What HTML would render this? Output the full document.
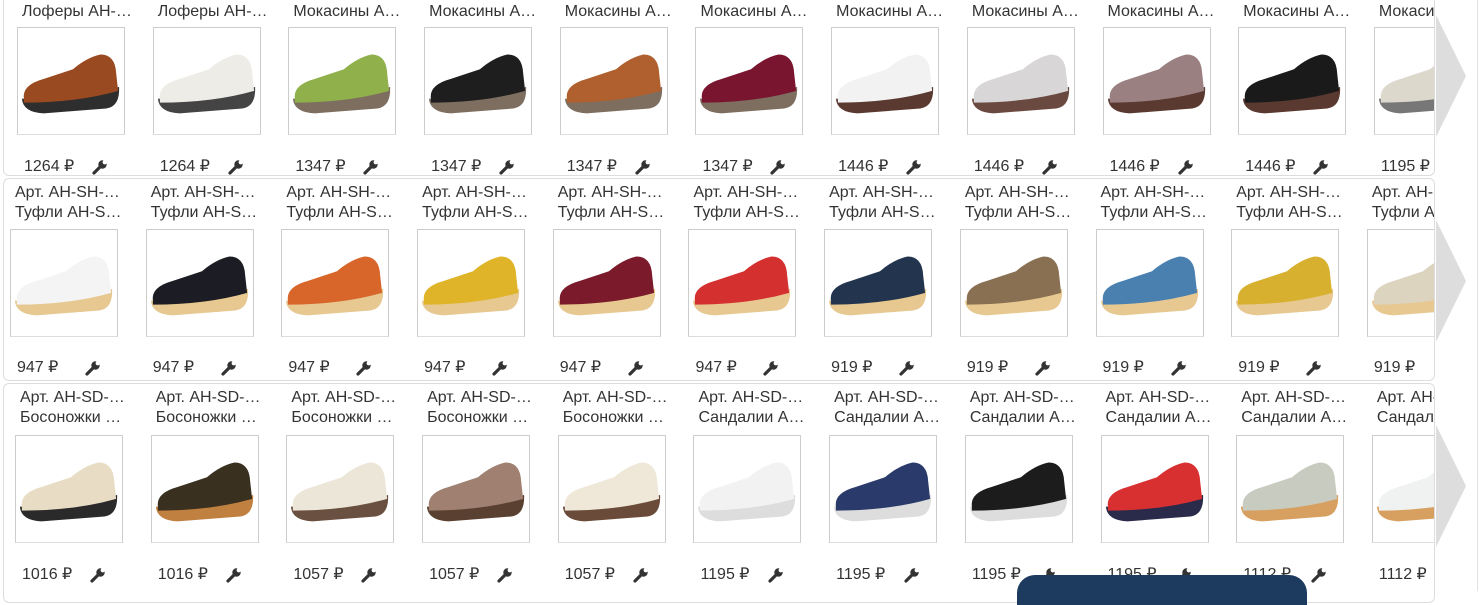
<!DOCTYPE html>
<html><head><meta charset="utf-8">
<style>
*{margin:0;padding:0;box-sizing:border-box}
body{width:1482px;height:591px;overflow:hidden;background:#fff;font-family:"Liberation Sans",Arial,sans-serif;color:#333;position:relative}
.card{position:absolute;left:3px;width:1432px;border:1px solid #ddd;border-radius:6px;overflow:hidden;background:#fff}
.row{position:absolute;display:flex;top:0}
.it{width:135.7px;flex:none;position:relative;font-size:16px;line-height:20px}
.t{white-space:nowrap;overflow:hidden;text-overflow:ellipsis;width:118px;padding-left:5px}
.img{width:108px;height:108px;border:1px solid #ccc;border-bottom-color:#ddd;background:#fff;position:absolute;left:0}
.p{position:absolute;left:7px;white-space:nowrap}
.w{position:absolute;left:75px}
.arr{position:absolute;left:1436px}
</style></head><body>
<svg width="0" height="0" style="position:absolute">
<defs>
<symbol id="up" viewBox="0 0 108 108"><path d="M6 72 Q4 58 26 52 L56 42 Q70 30 84 27 Q99 27 100 46 L102 64 Q60 76 6 76Z" fill="currentColor"/></symbol>
<symbol id="so" viewBox="0 0 108 108"><path d="M4 72 Q5 86 26 87 L90 82 Q104 80 103 60 Q60 76 4 72Z" fill="currentColor"/></symbol>
<symbol id="wr" viewBox="0 0 16 16"><path d="M2 14 L8 8" stroke="#333" stroke-width="3.2" stroke-linecap="round"/><circle cx="10.5" cy="5.5" r="4.2" fill="#333"/><circle cx="12.8" cy="3.2" r="2.2" fill="#fff"/></symbol>
</defs></svg>

<!-- ROW 1 -->
<div class="card" style="top:-6px;height:182px">
<div class="row" style="left:13px;top:7px">
<div class="it"><div class="t">Лоферы АН-…</div><div class="img" style="top:25px"><svg width="106" height="106"><use href="#so" style="color:#2e2e2e"/><use href="#up" style="color:#9a4a20"/></svg></div><div class="p" style="top:155px">1264 ₽</div><svg class="w" style="top:157px" width="16" height="16"><use href="#wr"/></svg></div>
<div class="it"><div class="t">Лоферы АН-…</div><div class="img" style="top:25px"><svg width="106" height="106"><use href="#so" style="color:#444"/><use href="#up" style="color:#eeece6"/></svg></div><div class="p" style="top:155px">1264 ₽</div><svg class="w" style="top:157px" width="16" height="16"><use href="#wr"/></svg></div>
<div class="it"><div class="t">Мокасины А…</div><div class="img" style="top:25px"><svg width="106" height="106"><use href="#so" style="color:#7d6e60"/><use href="#up" style="color:#8fb04a"/></svg></div><div class="p" style="top:155px">1347 ₽</div><svg class="w" style="top:157px" width="16" height="16"><use href="#wr"/></svg></div>
<div class="it"><div class="t">Мокасины А…</div><div class="img" style="top:25px"><svg width="106" height="106"><use href="#so" style="color:#7d6e60"/><use href="#up" style="color:#1e1e1e"/></svg></div><div class="p" style="top:155px">1347 ₽</div><svg class="w" style="top:157px" width="16" height="16"><use href="#wr"/></svg></div>
<div class="it"><div class="t">Мокасины А…</div><div class="img" style="top:25px"><svg width="106" height="106"><use href="#so" style="color:#7d6e60"/><use href="#up" style="color:#b0602e"/></svg></div><div class="p" style="top:155px">1347 ₽</div><svg class="w" style="top:157px" width="16" height="16"><use href="#wr"/></svg></div>
<div class="it"><div class="t">Мокасины А…</div><div class="img" style="top:25px"><svg width="106" height="106"><use href="#so" style="color:#7d6e60"/><use href="#up" style="color:#7a1530"/></svg></div><div class="p" style="top:155px">1347 ₽</div><svg class="w" style="top:157px" width="16" height="16"><use href="#wr"/></svg></div>
<div class="it"><div class="t">Мокасины А…</div><div class="img" style="top:25px"><svg width="106" height="106"><use href="#so" style="color:#5a3a30"/><use href="#up" style="color:#f2f2f2"/></svg></div><div class="p" style="top:155px">1446 ₽</div><svg class="w" style="top:157px" width="16" height="16"><use href="#wr"/></svg></div>
<div class="it"><div class="t">Мокасины А…</div><div class="img" style="top:25px"><svg width="106" height="106"><use href="#so" style="color:#6a4a40"/><use href="#up" style="color:#d8d6d6"/></svg></div><div class="p" style="top:155px">1446 ₽</div><svg class="w" style="top:157px" width="16" height="16"><use href="#wr"/></svg></div>
<div class="it"><div class="t">Мокасины А…</div><div class="img" style="top:25px"><svg width="106" height="106"><use href="#so" style="color:#5a3a30"/><use href="#up" style="color:#9a8080"/></svg></div><div class="p" style="top:155px">1446 ₽</div><svg class="w" style="top:157px" width="16" height="16"><use href="#wr"/></svg></div>
<div class="it"><div class="t">Мокасины А…</div><div class="img" style="top:25px"><svg width="106" height="106"><use href="#so" style="color:#5a3a30"/><use href="#up" style="color:#1a1a1a"/></svg></div><div class="p" style="top:155px">1446 ₽</div><svg class="w" style="top:157px" width="16" height="16"><use href="#wr"/></svg></div>
<div class="it"><div class="t">Мокасины А…</div><div class="img" style="top:25px"><svg width="106" height="106"><use href="#so" style="color:#777"/><use href="#up" style="color:#dcd8cc"/></svg></div><div class="p" style="top:155px">1195 ₽</div><svg class="w" style="top:157px" width="16" height="16"><use href="#wr"/></svg></div>
</div></div>

<!-- ROW 2 -->
<div class="card" style="top:178px;height:203px">
<div class="row" style="left:6px;top:4px">
<div class="it"><div class="t">Арт. АН-SH-…</div><div class="t">Туфли АН-S…</div><div class="img" style="top:46px"><svg width="106" height="106"><use href="#so" style="color:#e6c890"/><use href="#up" style="color:#f4f4f4"/></svg></div><div class="p" style="top:175px">947 ₽</div><svg class="w" style="top:177px" width="16" height="16"><use href="#wr"/></svg></div>
<div class="it"><div class="t">Арт. АН-SH-…</div><div class="t">Туфли АН-S…</div><div class="img" style="top:46px"><svg width="106" height="106"><use href="#so" style="color:#e6c890"/><use href="#up" style="color:#1c1c24"/></svg></div><div class="p" style="top:175px">947 ₽</div><svg class="w" style="top:177px" width="16" height="16"><use href="#wr"/></svg></div>
<div class="it"><div class="t">Арт. АН-SH-…</div><div class="t">Туфли АН-S…</div><div class="img" style="top:46px"><svg width="106" height="106"><use href="#so" style="color:#e6c890"/><use href="#up" style="color:#d8662a"/></svg></div><div class="p" style="top:175px">947 ₽</div><svg class="w" style="top:177px" width="16" height="16"><use href="#wr"/></svg></div>
<div class="it"><div class="t">Арт. АН-SH-…</div><div class="t">Туфли АН-S…</div><div class="img" style="top:46px"><svg width="106" height="106"><use href="#so" style="color:#e6c890"/><use href="#up" style="color:#e0b428"/></svg></div><div class="p" style="top:175px">947 ₽</div><svg class="w" style="top:177px" width="16" height="16"><use href="#wr"/></svg></div>
<div class="it"><div class="t">Арт. АН-SH-…</div><div class="t">Туфли АН-S…</div><div class="img" style="top:46px"><svg width="106" height="106"><use href="#so" style="color:#e6c890"/><use href="#up" style="color:#7a1a2a"/></svg></div><div class="p" style="top:175px">947 ₽</div><svg class="w" style="top:177px" width="16" height="16"><use href="#wr"/></svg></div>
<div class="it"><div class="t">Арт. АН-SH-…</div><div class="t">Туфли АН-S…</div><div class="img" style="top:46px"><svg width="106" height="106"><use href="#so" style="color:#e6c890"/><use href="#up" style="color:#d43030"/></svg></div><div class="p" style="top:175px">947 ₽</div><svg class="w" style="top:177px" width="16" height="16"><use href="#wr"/></svg></div>
<div class="it"><div class="t">Арт. АН-SH-…</div><div class="t">Туфли АН-S…</div><div class="img" style="top:46px"><svg width="106" height="106"><use href="#so" style="color:#e6c890"/><use href="#up" style="color:#22344e"/></svg></div><div class="p" style="top:175px">919 ₽</div><svg class="w" style="top:177px" width="16" height="16"><use href="#wr"/></svg></div>
<div class="it"><div class="t">Арт. АН-SH-…</div><div class="t">Туфли АН-S…</div><div class="img" style="top:46px"><svg width="106" height="106"><use href="#so" style="color:#e6c890"/><use href="#up" style="color:#8a7052"/></svg></div><div class="p" style="top:175px">919 ₽</div><svg class="w" style="top:177px" width="16" height="16"><use href="#wr"/></svg></div>
<div class="it"><div class="t">Арт. АН-SH-…</div><div class="t">Туфли АН-S…</div><div class="img" style="top:46px"><svg width="106" height="106"><use href="#so" style="color:#e6c890"/><use href="#up" style="color:#4a80b0"/></svg></div><div class="p" style="top:175px">919 ₽</div><svg class="w" style="top:177px" width="16" height="16"><use href="#wr"/></svg></div>
<div class="it"><div class="t">Арт. АН-SH-…</div><div class="t">Туфли АН-S…</div><div class="img" style="top:46px"><svg width="106" height="106"><use href="#so" style="color:#e6c890"/><use href="#up" style="color:#d8b030"/></svg></div><div class="p" style="top:175px">919 ₽</div><svg class="w" style="top:177px" width="16" height="16"><use href="#wr"/></svg></div>
<div class="it"><div class="t">Арт. АН-SH-…</div><div class="t">Туфли АН-S…</div><div class="img" style="top:46px"><svg width="106" height="106"><use href="#so" style="color:#e6c890"/><use href="#up" style="color:#ddd4c0"/></svg></div><div class="p" style="top:175px">919 ₽</div><svg class="w" style="top:177px" width="16" height="16"><use href="#wr"/></svg></div>
</div></div>

<!-- ROW 3 -->
<div class="card" style="top:383px;height:220px">
<div class="row" style="left:11px;top:4px">
<div class="it"><div class="t">Арт. АН-SD-…</div><div class="t">Босоножки …</div><div class="img" style="top:47px"><svg width="106" height="106"><use href="#so" style="color:#2a2a2a"/><use href="#up" style="color:#e8dcc4"/></svg></div><div class="p" style="top:177px">1016 ₽</div><svg class="w" style="top:179px" width="16" height="16"><use href="#wr"/></svg></div>
<div class="it"><div class="t">Арт. АН-SD-…</div><div class="t">Босоножки …</div><div class="img" style="top:47px"><svg width="106" height="106"><use href="#so" style="color:#c08040"/><use href="#up" style="color:#3a3020"/></svg></div><div class="p" style="top:177px">1016 ₽</div><svg class="w" style="top:179px" width="16" height="16"><use href="#wr"/></svg></div>
<div class="it"><div class="t">Арт. АН-SD-…</div><div class="t">Босоножки …</div><div class="img" style="top:47px"><svg width="106" height="106"><use href="#so" style="color:#6a5040"/><use href="#up" style="color:#ece6d8"/></svg></div><div class="p" style="top:177px">1057 ₽</div><svg class="w" style="top:179px" width="16" height="16"><use href="#wr"/></svg></div>
<div class="it"><div class="t">Арт. АН-SD-…</div><div class="t">Босоножки …</div><div class="img" style="top:47px"><svg width="106" height="106"><use href="#so" style="color:#5a4030"/><use href="#up" style="color:#a08070"/></svg></div><div class="p" style="top:177px">1057 ₽</div><svg class="w" style="top:179px" width="16" height="16"><use href="#wr"/></svg></div>
<div class="it"><div class="t">Арт. АН-SD-…</div><div class="t">Босоножки …</div><div class="img" style="top:47px"><svg width="106" height="106"><use href="#so" style="color:#6a4a38"/><use href="#up" style="color:#efe8d8"/></svg></div><div class="p" style="top:177px">1057 ₽</div><svg class="w" style="top:179px" width="16" height="16"><use href="#wr"/></svg></div>
<div class="it"><div class="t">Арт. АН-SD-…</div><div class="t">Сандалии А…</div><div class="img" style="top:47px"><svg width="106" height="106"><use href="#so" style="color:#ddd"/><use href="#up" style="color:#f2f2f2"/></svg></div><div class="p" style="top:177px">1195 ₽</div><svg class="w" style="top:179px" width="16" height="16"><use href="#wr"/></svg></div>
<div class="it"><div class="t">Арт. АН-SD-…</div><div class="t">Сандалии А…</div><div class="img" style="top:47px"><svg width="106" height="106"><use href="#so" style="color:#ddd"/><use href="#up" style="color:#2a3a6a"/></svg></div><div class="p" style="top:177px">1195 ₽</div><svg class="w" style="top:179px" width="16" height="16"><use href="#wr"/></svg></div>
<div class="it"><div class="t">Арт. АН-SD-…</div><div class="t">Сандалии А…</div><div class="img" style="top:47px"><svg width="106" height="106"><use href="#so" style="color:#ddd"/><use href="#up" style="color:#1c1c1c"/></svg></div><div class="p" style="top:177px">1195 ₽</div><svg class="w" style="top:179px" width="16" height="16"><use href="#wr"/></svg></div>
<div class="it"><div class="t">Арт. АН-SD-…</div><div class="t">Сандалии А…</div><div class="img" style="top:47px"><svg width="106" height="106"><use href="#so" style="color:#2a2a4a"/><use href="#up" style="color:#d83030"/></svg></div><div class="p" style="top:177px">1195 ₽</div><svg class="w" style="top:179px" width="16" height="16"><use href="#wr"/></svg></div>
<div class="it"><div class="t">Арт. АН-SD-…</div><div class="t">Сандалии А…</div><div class="img" style="top:47px"><svg width="106" height="106"><use href="#so" style="color:#d8a060"/><use href="#up" style="color:#c8ccc0"/></svg></div><div class="p" style="top:177px">1112 ₽</div><svg class="w" style="top:179px" width="16" height="16"><use href="#wr"/></svg></div>
<div class="it"><div class="t">Арт. АН-SD-…</div><div class="t">Сандалии А…</div><div class="img" style="top:47px"><svg width="106" height="106"><use href="#so" style="color:#d8a060"/><use href="#up" style="color:#f0f2f2"/></svg></div><div class="p" style="top:177px">1112 ₽</div><svg class="w" style="top:179px" width="16" height="16"><use href="#wr"/></svg></div>
</div></div>

<!-- arrows -->
<svg class="arr" style="top:15px" width="32" height="122"><polygon points="0,0 30,61 0,122" fill="#ddd"/></svg>
<svg class="arr" style="top:220px" width="32" height="122"><polygon points="0,0 30,61 0,122" fill="#ddd"/></svg>
<svg class="arr" style="top:425px" width="32" height="122"><polygon points="0,0 30,61 0,122" fill="#ddd"/></svg>
<div style="position:absolute;left:1477px;top:0;width:1px;height:591px;background:#e2e2e2"></div>

<div style="position:absolute;left:1017px;top:575px;width:290px;height:30px;background:#1d3a5f;border-radius:18px 18px 0 0"></div>
</body></html>
